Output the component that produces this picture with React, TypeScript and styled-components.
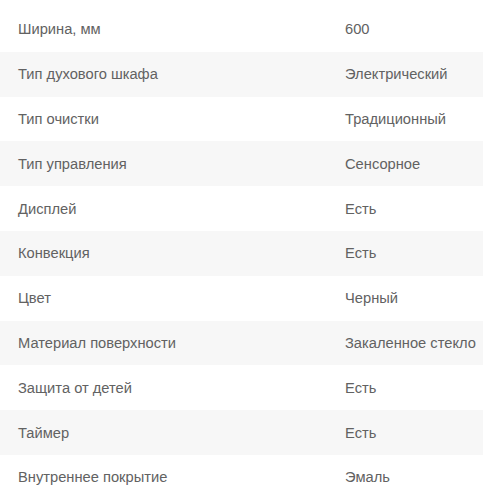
import React from 'react'
import styled, { createGlobalStyle } from 'styled-components';

const GlobalStyle = createGlobalStyle`
    html, body {
        margin: 0;
        padding: 0;
        background: #fff;
    }
`;

const StyledSpecs = styled.div`
    padding-top: 7px;
    font-family: "Liberation Sans", Arial, sans-serif;
    font-size: 14.7px;
    color: #626262;
`;

const StyledRow = styled.div<{ shaded: boolean }>`
    display: grid;
    grid-template-columns: 327px 1fr;
    height: 44.8px;
    align-items: center;
    padding-left: 18px;
    background: ${props => props.shaded ? '#f7f7f7' : '#fff'};
`;

const StyledName = styled.div`
    white-space: nowrap;
`;

const StyledValue = styled.div`
    white-space: nowrap;
`;

const specs = [
    ['Ширина, мм', '600'],
    ['Тип духового шкафа', 'Электрический'],
    ['Тип очистки', 'Традиционный'],
    ['Тип управления', 'Сенсорное'],
    ['Дисплей', 'Есть'],
    ['Конвекция', 'Есть'],
    ['Цвет', 'Черный'],
    ['Материал поверхности', 'Закаленное стекло'],
    ['Защита от детей', 'Есть'],
    ['Таймер', 'Есть'],
    ['Внутреннее покрытие', 'Эмаль'],
];

export default function App() {
    return (
        <>
            <GlobalStyle />
            <StyledSpecs>
                {
                    specs.map(([name, value], i) => (
                        <StyledRow key={name} shaded={i % 2 === 1}>
                            <StyledName>{name}</StyledName>
                            <StyledValue>{value}</StyledValue>
                        </StyledRow>
                    ))
                }
            </StyledSpecs>
        </>
    )
}
